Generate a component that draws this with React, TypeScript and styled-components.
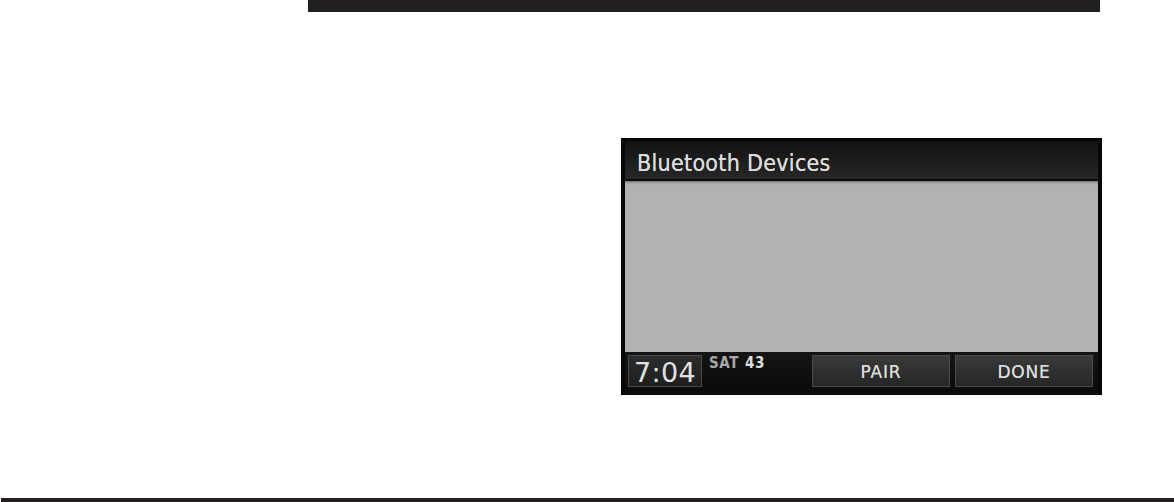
import styled, { createGlobalStyle } from "styled-components";

const GlobalStyle = createGlobalStyle`
	html, body {
		margin: 0;
		padding: 0;
		background: #ffffff;
	}
	body {
		font-family: "DejaVu Sans Condensed", "DejaVu Sans", sans-serif;
	}
`;

const Page = styled.main`
	display: flex;
	flex-direction: column;
	width: 1174px;
	height: 502px;
	overflow: hidden;
`;

const TopRule = styled.div`
	margin-left: 308px;
	width: 792px;
	height: 12px;
	background: #231f20;
`;

const Screen = styled.section`
	display: flex;
	flex-direction: column;
	margin: 126px 0 0 621px;
	width: 481px;
	height: 257px;
	box-sizing: border-box;
	padding: 3px 4px 0 4px;
	background: #070707;
`;

const Header = styled.header`
	display: flex;
	align-items: center;
	height: 38px;
	padding-left: 12px;
	background: linear-gradient(#121212, #272727);
	border-bottom: 2px solid #0b0b0b;

	.title {
		color: #dcdcdc;
		font-size: 23px;
		letter-spacing: 0.3px;
		padding-top: 6px;
		text-shadow: 0 0 0.5px #dcdcdc;
	}
`;

const Body = styled.div`
	flex: 1;
	background: linear-gradient(#6e6e6e 0, #a4a4a4 2px, #b2b2b2 4px, #b2b2b2);
`;

const Footer = styled.footer`
	display: flex;
	align-items: flex-start;
	height: 43px;
	box-sizing: border-box;
	padding: 3px 5px 0 3px;
	background: linear-gradient(#141414, #0a0a0a);
`;

const Clock = styled.div`
	display: flex;
	align-items: center;
	justify-content: center;
	width: 74px;
	height: 32px;
	box-sizing: border-box;
	padding-top: 2px;
	border: 1px solid #4a4a4a;
	background: linear-gradient(#2c2c2c, #1e1e1e);
	color: #e2e2e2;
	font-family: "DejaVu Sans", sans-serif;
	font-size: 27px;
	letter-spacing: 0.3px;
`;

const Status = styled.div`
	width: 103px;
	padding: 0 0 0 7px;
	font-family: "DejaVu Sans Condensed", "DejaVu Sans", sans-serif;
	font-weight: bold;
	font-size: 15px;
	line-height: 16px;
	letter-spacing: 0.6px;
	color: #a8a8a8;

	b {
		color: #dedede;
		margin-left: 6px;
	}
`;

const SoftKey = styled.button<{ gap?: number }>`
	display: flex;
	align-items: center;
	justify-content: center;
	width: 138px;
	height: 32px;
	margin-left: ${(p) => p.gap ?? 0}px;
	padding: 2px 0 0 0;
	box-sizing: border-box;
	border: 1px solid #4c4c4c;
	background: linear-gradient(#3a3a3a, #262626);
	color: #dadada;
	font-family: "DejaVu Sans", sans-serif;
	font-size: 17px;
	letter-spacing: 0.8px;
	text-shadow: 0 0 0.3px #dadada;
`;

const Spacer = styled.div`
	flex: 1;
`;

const BottomRule = styled.div`
	margin-left: 1px;
	height: 4px;
	background: #231f20;
`;

export default function App() {
	return (
		<>
			<GlobalStyle />
			<Page>
				<TopRule />
				<Screen>
					<Header>
						<span className="title">Bluetooth Devices</span>
					</Header>
					<Body />
					<Footer>
						<Clock>7:04</Clock>
						<Status>
							SAT<b>43</b>
						</Status>
						<SoftKey>PAIR</SoftKey>
						<SoftKey gap={5}>DONE</SoftKey>
					</Footer>
				</Screen>
				<Spacer />
				<BottomRule />
			</Page>
		</>
	);
}
